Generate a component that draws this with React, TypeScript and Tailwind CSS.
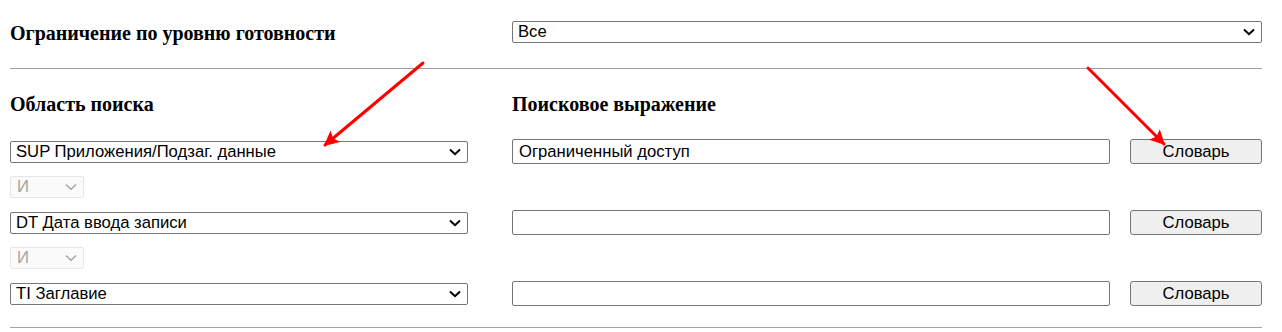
import { ReactNode } from "react";

const rows = [
  { field: "SUP Приложения/Подзаг. данные", value: "Ограниченный доступ" },
  { field: "DT Дата ввода записи", value: "" },
  { field: "TI Заглавие", value: "" },
];

function Chevron({ muted }: { muted?: boolean }) {
  return (
    <svg
      width="12"
      height="8"
      viewBox="0 0 12 8"
      className="pointer-events-none absolute top-1/2 right-[6px] -translate-y-1/2"
    >
      <path
        d="M1 1.5 L6 6.2 L11 1.5"
        fill="none"
        stroke={muted ? "#a3a3a3" : "#000"}
        strokeWidth={muted ? 1.4 : 2}
      />
    </svg>
  );
}

function FakeSelect({ value, className }: { value: string; className?: string }) {
  return (
    <div
      className={`relative flex h-[22px] items-center rounded-[2px] border border-[#767676] bg-white pt-px pl-[5px] text-[16.67px] text-black ${className ?? ""}`}
    >
      <span className="leading-none">{value}</span>
      <Chevron />
    </div>
  );
}

function AndSelect() {
  return (
    <div className="relative flex h-[22px] w-[74px] items-center rounded-[2px] border border-[#e6e6e6] bg-[#fafafa] pt-px pl-[6px] text-[16.67px] text-[#a3a3a3]">
      <span className="leading-none">И</span>
      <Chevron muted />
    </div>
  );
}

function Heading({ children }: { children: ReactNode }) {
  return (
    <h3 className="font-['Liberation_Serif',serif] text-[20px] leading-none font-bold text-black">
      {children}
    </h3>
  );
}

export default function App() {
  return (
    <div className="relative h-[332px] w-[1282px] overflow-hidden bg-white pr-[20px] pl-[10px] font-['Liberation_Sans',Arial,sans-serif]">
      <div className="flex h-[68px] items-center pb-[2px]">
        <div className="w-[502px]">
          <Heading>Ограничение по уровню готовности</Heading>
        </div>
        <FakeSelect value="Все" className="mb-[2px] flex-1" />
      </div>
      <div className="h-px bg-[#a0a0a0]" />

      <div className="flex h-[70px] items-center pb-[1px]">
        <div className="w-[502px]">
          <Heading>Область поиска</Heading>
        </div>
        <Heading>Поисковое выражение</Heading>
      </div>

      {rows.map((row, i) => (
        <div key={row.field}>
          {i > 0 && (
            <div className="flex h-[46px] items-center">
              <AndSelect />
            </div>
          )}
          <div className="flex h-[25px] items-center">
            <FakeSelect value={row.field} className="w-[458px]" />
            <div className="ml-[44px] flex h-[25px] w-[598px] items-center rounded-[2px] border border-[#767676] bg-white pt-px pl-[6px] text-[16.67px] text-black">
              <span className="leading-none">{row.value}</span>
            </div>
            <button className="ml-[20px] flex h-[25px] w-[132px] items-center justify-center rounded-[3px] border border-[#767676] bg-[#efefef] pt-px text-[16.67px] leading-none text-black">
              Словарь
            </button>
          </div>
        </div>
      ))}

      <div className="mt-[21px] h-px bg-[#a0a0a0]" />

      <svg
        width="1282"
        height="332"
        className="pointer-events-none absolute top-0 left-0"
      >
        <defs>
          <marker
            id="head"
            viewBox="0 0 10 10"
            refX="9"
            refY="5"
            markerWidth="6.5"
            markerHeight="5"
            orient="auto"
            markerUnits="strokeWidth"
          >
            <path d="M0 0 L10 5 L0 10 L2 5 Z" fill="#ff0000" />
          </marker>
        </defs>
        <line x1="423" y1="63" x2="325" y2="145" stroke="#ff0000" strokeWidth="3" strokeLinecap="round" markerEnd="url(#head)" />
        <line x1="1088" y1="68" x2="1164" y2="144" stroke="#ff0000" strokeWidth="3" strokeLinecap="round" markerEnd="url(#head)" />
      </svg>
    </div>
  );
}
